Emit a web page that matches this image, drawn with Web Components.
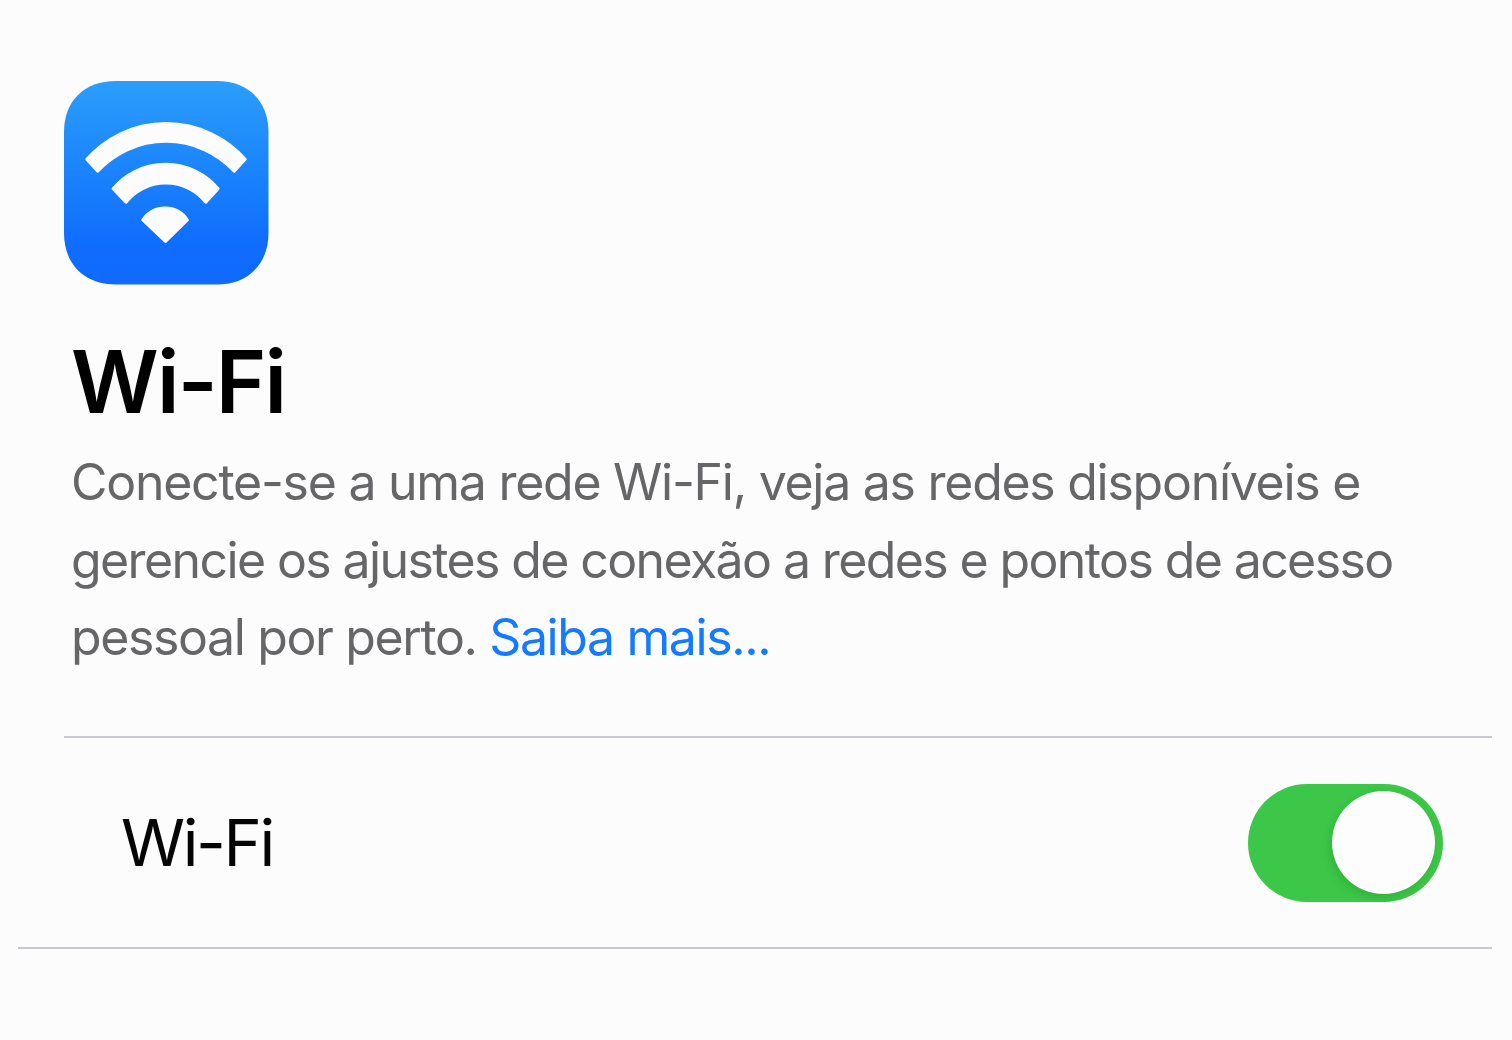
<!DOCTYPE html>
<html lang="pt-BR">
<head>
  <meta charset="UTF-8">
  <meta name="viewport" content="width=device-width, initial-scale=1.0">
  <title>Wi-Fi</title>
  <style>
    body {
      margin: 0;
      background: #fcfcfc;
      font-family: Inter, "Liberation Sans", sans-serif;
    }
  </style>
</head>
<body>
  <settings-page>
    <settings-header heading="Wi-Fi">
      <wifi-icon slot="icon"></wifi-icon>
      <text-line style="--spacing: -1.27px">Conecte-se a uma rede Wi-Fi, veja as redes disponíveis e</text-line>
      <text-line style="--spacing: -1.61px">gerencie os ajustes de conexão a redes e pontos de acesso</text-line>
      <text-line style="--spacing: -1.38px">pessoal por perto. <more-link href="#">Saiba mais...</more-link></text-line>
    </settings-header>
    <settings-row>
      Wi-Fi
      <toggle-switch slot="control" checked></toggle-switch>
    </settings-row>
  </settings-page>

  <script>
    class SettingsPage extends HTMLElement {
      constructor() {
        super();
        this.attachShadow({ mode: 'open' }).innerHTML = `
          <style>
          :host {
            display: flex;
            flex-direction: column;
            box-sizing: border-box;
            height: 1040px;
            padding: 81px 20.5px 0 18px;
            overflow: hidden;
          }
          </style>
          <slot></slot>
        `;
      }
    }

    class SettingsHeader extends HTMLElement {
      connectedCallback() {
        this.attachShadow({ mode: 'open' }).innerHTML = `
          <style>
          :host {
            display: block;
            box-sizing: border-box;
            height: 657px;
            margin-left: 46px;
            border-bottom: 2px solid #cac9d2;
          }

          h1 {
            margin: 44px 0 0 7px;
            color: #000;
            font-size: 86px;
            font-weight: 600;
            line-height: 106px;
            letter-spacing: -1.8px;
            white-space: nowrap;
          }

          .description {
            margin: 9px 0 0 7px;
            color: #666669;
            font-size: 50px;
            font-weight: 420;
            line-height: 77.5px;
          }
          </style>
          <slot name="icon"></slot>
          <h1>${this.getAttribute('heading')}</h1>
          <div class="description"><slot></slot></div>
        `;
      }
    }

    class TextLine extends HTMLElement {
      constructor() {
        super();
        this.attachShadow({ mode: 'open' }).innerHTML = `
          <style>
          :host {
            display: block;
            letter-spacing: var(--spacing);
            white-space: nowrap;
          }
          </style>
          <slot></slot>
        `;
      }
    }

    class MoreLink extends HTMLElement {
      connectedCallback() {
        this.attachShadow({ mode: 'open' }).innerHTML = `
          <style>
          :host {
            display: inline;
          }

          a {
            color: #147aff;
            text-decoration: none;
          }
          </style>
          <a href="${this.getAttribute('href')}"><slot></slot></a>
        `;
      }
    }

    class WifiIcon extends HTMLElement {
      constructor() {
        super();
        this.attachShadow({ mode: 'open' }).innerHTML = `
          <style>
          :host {
            display: block;
            width: 205px;
            height: 204px;
          }

          svg {
            display: block;
          }
          </style>
          <svg width="205" height="204" viewBox="0 0 205 204">
            <defs>
              <linearGradient id="blue" x1="0" y1="0" x2="0" y2="1">
                <stop offset="0" stop-color="#2b9efb"/>
                <stop offset="0.45" stop-color="#1a83fc"/>
                <stop offset="0.8" stop-color="#0f6dfd"/>
                <stop offset="1" stop-color="#0f6afd"/>
              </linearGradient>
            </defs>
            <path fill="url(#blue)" d="M52 0H153C184 0 204.500 20 204.500 51V152C204.500 183 184 203.500 153 203.500H52C20 203.500 0 183 0 152V51C0 20 20 0 52 0Z"/>
            <g fill="#fcfcfd" stroke="#fcfcfd" stroke-width="3" stroke-linejoin="round">
              <path d="M22.800 78.300A105.700 105.700 0 0 1 181.200 78.300L170.200 90.200A92.800 92.800 0 0 0 33.700 90.200Z"/>
              <path d="M49.100 107.700A68.800 68.800 0 0 1 154.100 107.700L141.800 121.200A51.100 51.100 0 0 0 62 121.200Z"/>
              <path d="M78.800 139A26.800 26.800 0 0 1 123.400 139L101.500 160.400Z"/>
            </g>
          </svg>
        `;
      }
    }

    class SettingsRow extends HTMLElement {
      constructor() {
        super();
        this.attachShadow({ mode: 'open' }).innerHTML = `
          <style>
          :host {
            display: flex;
            align-items: center;
            justify-content: space-between;
            box-sizing: border-box;
            height: 211px;
            padding: 0 49px 0 103px;
            border-bottom: 2px solid #cac9d2;
            color: #050505;
            font-size: 65px;
            line-height: 80px;
            letter-spacing: -2.4px;
          }
          </style>
          <span><slot></slot></span>
          <slot name="control"></slot>
        `;
      }
    }

    class ToggleSwitch extends HTMLElement {
      constructor() {
        super();
        this.attachShadow({ mode: 'open' }).innerHTML = `
          <style>
          :host {
            display: flex;
            box-sizing: border-box;
            width: 194.5px;
            height: 118px;
            padding: 7.5px;
            border-radius: 59px;
            background: #d8d8dc;
            overflow: hidden;
          }

          :host([checked]) {
            justify-content: flex-end;
            background: #3cc748;
          }

          .knob {
            width: 103px;
            height: 103px;
            border-radius: 50%;
            background: #fdfdfd;
            box-shadow: -2px 4px 10px rgba(0, 60, 0, 0.16);
          }
          </style>
          <div class="knob"></div>
        `;
        this.addEventListener('click', () => this.toggleAttribute('checked'));
      }
    }

    customElements.define('settings-page', SettingsPage);
    customElements.define('settings-header', SettingsHeader);
    customElements.define('text-line', TextLine);
    customElements.define('more-link', MoreLink);
    customElements.define('wifi-icon', WifiIcon);
    customElements.define('settings-row', SettingsRow);
    customElements.define('toggle-switch', ToggleSwitch);
  </script>
</body>
</html>
